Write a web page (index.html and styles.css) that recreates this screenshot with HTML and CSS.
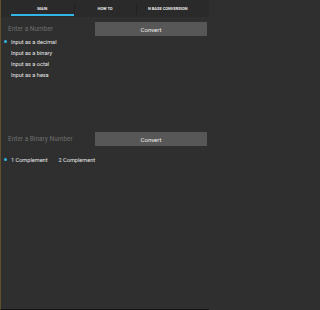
FILE: index.html
```html
<!DOCTYPE html>
<html>
<head>
<meta charset="utf-8">
<link rel="stylesheet" href="styles.css">
</head>
<body>
<div class="screen">
  <div class="tabs">
    <div class="tab active">MAIN</div>
    <div class="tab">HOW TO</div>
    <div class="tab">N BASE CONVERSION</div>
  </div>
  <div class="content">
    <div class="row">
      <div class="input">Enter a Number</div>
      <div class="button">Convert</div>
    </div>
    <div class="radios">
      <div class="radio checked"><span class="dot"></span><span class="label">Input as a decimal</span></div>
      <div class="radio"><span class="dot"></span><span class="label">Input as a binary</span></div>
      <div class="radio"><span class="dot"></span><span class="label">Input as a octal</span></div>
      <div class="radio"><span class="dot"></span><span class="label">Input as a hexa</span></div>
    </div>
    <div class="row second">
      <div class="input">Enter a Binary Number</div>
      <div class="button">Convert</div>
    </div>
    <div class="radios inline">
      <div class="radio checked"><span class="dot"></span><span class="label">1 Complement</span></div>
      <div class="radio"><span class="dot"></span><span class="label">2 Complement</span></div>
    </div>
  </div>
</div>
</body>
</html>
```
FILE: styles.css
```css
html, body {
  margin: 0;
  padding: 0;
  background: #2f2f2f;
}
body {
  font-family: Roboto, "Liberation Sans", sans-serif;
}
.screen {
  width: 209px;
  height: 310px;
  box-sizing: border-box;
  background: #2f2f2f;
  border-left: 1px solid #5f4f2c;
  border-bottom: 1px solid #141414;
  overflow: hidden;
}
.tabs {
  height: 17px;
  display: flex;
  padding: 0 10px;
  background: #2a2a2a;
}
.tab {
  width: 63px;
  position: relative;
  display: flex;
  justify-content: center;
  align-items: center;
  padding-bottom: 1px;
  box-sizing: border-box;
  font-size: 4px;
  font-weight: bold;
  color: #e6e6e6;
  white-space: nowrap;
}
.tab + .tab::before {
  content: "";
  position: absolute;
  left: 0;
  top: 3px;
  height: 11px;
  width: 1px;
  background: #222;
}
.tab.active::after {
  content: "";
  position: absolute;
  left: 0;
  right: 0;
  bottom: 1px;
  height: 2px;
  background: #33b5e5;
}
.content {
  padding: 5px 2px 0 2px;
}
.row {
  display: flex;
  height: 14px;
}
.row.second {
  margin-top: 52px;
}
.input {
  width: 82px;
  margin-left: 5px;
  display: flex;
  align-items: center;
  font-size: 6.5px;
  color: #6e6e6e;
  white-space: nowrap;
}
.button {
  margin-left: 5px;
  width: 112px;
  background: #575757;
  color: #ececec;
  font-size: 6px;
  display: flex;
  align-items: center;
  justify-content: center;
}
.radios {
  display: flex;
  flex-direction: column;
}
.radios.inline {
  flex-direction: row;
  margin-top: 8px;
}
.radio {
  height: 11px;
  display: flex;
  align-items: center;
  font-size: 5.6px;
  color: #e8e8e8;
  white-space: nowrap;
}
.radios.inline .radio + .radio {
  margin-left: 3px;
}
.dot {
  width: 3px;
  height: 3px;
  margin-left: 1px;
  border-radius: 50%;
}
.radio.checked .dot {
  background: #33b5e5;
}
.label {
  margin-left: 4px;
}
```
